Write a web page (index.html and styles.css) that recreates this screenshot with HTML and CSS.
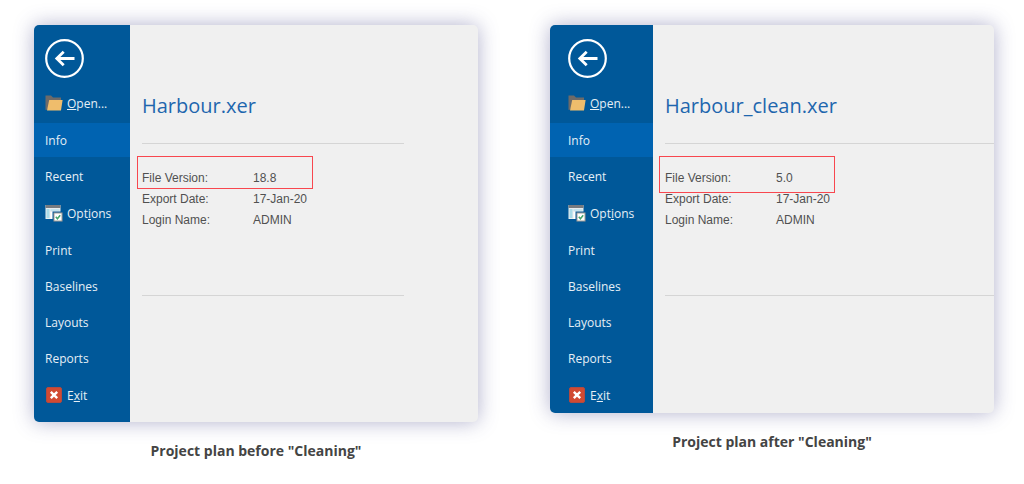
FILE: index.html
```
<!DOCTYPE html>
<html lang="en">
<head>
	<meta charset="UTF-8" />
	<meta name="viewport" content="width=device-width, initial-scale=1.0" />
	<title>XER Cleaning</title>
	<link rel="stylesheet" href="styles.css">
</head>
<body>
	<!-- Shared icons -->
	<svg class="sprite" aria-hidden="true">
		<symbol id="icon-back" viewBox="0 0 39 39">
			<circle cx="19.5" cy="19.5" r="18.3" fill="none" stroke="#fff" stroke-width="2.2"/>
			<path d="M29.5 19.5H12M18.7 12.8L11.8 19.5L18.7 26.2" fill="none" stroke="#fff" stroke-width="2.8"/>
		</symbol>
		<symbol id="icon-open" viewBox="0 0 18 16">
			<path d="M0.5 0.5H6L8 2.5H16V6H5L2.5 14.5L0.5 15Z" fill="#6d6a68"/>
			<path d="M4.2 5H17.6L16 15.5H2Z" fill="#efbd6c"/>
		</symbol>
		<symbol id="icon-options" viewBox="0 0 18 18">
			<rect x="0.5" y="1" width="15" height="14" fill="#e8edef"/>
			<rect x="0.5" y="1" width="15" height="3" fill="#777b80"/>
			<rect x="1.5" y="5" width="3" height="9" fill="#a9dbe9"/>
			<rect x="5.5" y="5" width="9" height="2" fill="#c4e3ed"/>
			<rect x="5.5" y="8" width="4" height="7" fill="#fff"/>
			<path d="M7.5 7.5H18V18H7.5Z" fill="#00589a"/>
			<rect x="9" y="9" width="8" height="8" fill="#fff" stroke="#a39c94"/>
			<path d="M10.8 12.8L12.4 14.7L15.2 11.2" fill="none" stroke="#45a56c" stroke-width="1.5"/>
		</symbol>
		<symbol id="icon-exit" viewBox="0 0 16 16">
			<rect x="0.5" y="0.5" width="15" height="15" rx="1.5" fill="#d14a32" stroke="#b24a40"/>
			<path d="M4.8 4.8L11.2 11.2M11.2 4.8L4.8 11.2" stroke="#fff" stroke-width="2.4"/>
		</symbol>
	</svg>

	<main class="compare">
		<figure class="plan">
			<div class="window window-before">
				<nav class="sidebar">
					<button class="back" aria-label="Back"><svg><use href="#icon-back"/></svg></button>
					<ul class="menu">
						<li><a class="with-icon" href="#"><svg class="icon"><use href="#icon-open"/></svg><span><u>O</u>pen...</span></a></li>
						<li><a class="active" href="#">Info</a></li>
						<li><a href="#">Recent</a></li>
						<li><a class="with-icon" href="#"><svg class="icon icon-tall"><use href="#icon-options"/></svg><span>Opt<u>i</u>ons</span></a></li>
						<li><a href="#">Print</a></li>
						<li><a href="#">Baselines</a></li>
						<li><a href="#">Layouts</a></li>
						<li><a href="#">Reports</a></li>
						<li><a class="with-icon" href="#"><svg class="icon"><use href="#icon-exit"/></svg><span>E<u>x</u>it</span></a></li>
					</ul>
				</nav>
				<section class="content">
					<h2>Harbour.xer</h2>
					<div class="details">
						<table>
							<tr><th scope="row">File Version:</th><td>18.8</td></tr>
							<tr><th scope="row">Export Date:</th><td>17-Jan-20</td></tr>
							<tr><th scope="row">Login Name:</th><td>ADMIN</td></tr>
						</table>
						<span class="marker"></span>
					</div>
				</section>
			</div>
			<figcaption>Project plan before "Cleaning"</figcaption>
		</figure>

		<figure class="plan">
			<div class="window window-after">
				<nav class="sidebar">
					<button class="back" aria-label="Back"><svg><use href="#icon-back"/></svg></button>
					<ul class="menu">
						<li><a class="with-icon" href="#"><svg class="icon"><use href="#icon-open"/></svg><span><u>O</u>pen...</span></a></li>
						<li><a class="active" href="#">Info</a></li>
						<li><a href="#">Recent</a></li>
						<li><a class="with-icon" href="#"><svg class="icon icon-tall"><use href="#icon-options"/></svg><span>Opt<u>i</u>ons</span></a></li>
						<li><a href="#">Print</a></li>
						<li><a href="#">Baselines</a></li>
						<li><a href="#">Layouts</a></li>
						<li><a href="#">Reports</a></li>
						<li><a class="with-icon" href="#"><svg class="icon"><use href="#icon-exit"/></svg><span>E<u>x</u>it</span></a></li>
					</ul>
				</nav>
				<section class="content">
					<h2>Harbour_clean.xer</h2>
					<div class="details">
						<table>
							<tr><th scope="row">File Version:</th><td>5.0</td></tr>
							<tr><th scope="row">Export Date:</th><td>17-Jan-20</td></tr>
							<tr><th scope="row">Login Name:</th><td>ADMIN</td></tr>
						</table>
						<span class="marker"></span>
					</div>
				</section>
			</div>
			<figcaption>Project plan after "Cleaning"</figcaption>
		</figure>
	</main>
</body>
</html>
```
FILE: styles.css
```
* {
	box-sizing: border-box;
}
body {
	margin: 0;
	background-color: #fff;
	font-family: "Open Sans", sans-serif;
}
.sprite {
	display: none;
}
.compare {
	display: flex;
	align-items: flex-start;
	gap: 72px;
	padding: 25px 30px 0 34px;
}
.plan {
	flex: 1;
	min-width: 0;
	margin: 0;
}
.window {
	display: flex;
	overflow: hidden;
	border-radius: 5px;
	background-color: #f0f0f0;
	box-shadow: 0 0 20px rgba(60, 60, 130, 0.4);
}

/* Sidebar */
.sidebar {
	flex: none;
	width: 96px;
	padding-top: 14px;
	background-color: #005899;
}
.window-before .sidebar {
	padding-bottom: 9px;
}
.window-after .sidebar {
	width: 103px;
}
.back {
	display: block;
	width: 39px;
	height: 39px;
	margin: 0 0 7px 11px;
	padding: 0;
	border: none;
	background: none;
	cursor: pointer;
}
.window-after .back {
	margin-left: 18px;
}
.back svg {
	display: block;
	width: 39px;
	height: 39px;
}
.menu {
	display: flex;
	flex-direction: column;
	gap: 2px;
	margin: 0;
	padding: 0;
	list-style: none;
}
.menu a {
	display: flex;
	align-items: center;
	height: 34px;
	padding-left: 11px;
	color: #e6eff6;
	font-size: 12px;
	text-decoration: none;
}
.window-after .menu a {
	padding-left: 18px;
}
.menu .with-icon {
	height: 36px;
	gap: 4px;
}
.menu .active {
	background-color: #0063b1;
}
.icon {
	width: 18px;
	height: 16px;
}
.icon-tall {
	height: 18px;
}

/* File info */
.content {
	flex: 1;
	min-width: 0;
	padding: 66px 0 0 12px;
}
.window-before .content {
	padding-right: 74px;
}
.content h2 {
	margin: 0;
	padding-bottom: 22px;
	color: #1e66ae;
	font-size: 20px;
	font-weight: 400;
	line-height: 30px;
}
.details {
	position: relative;
	height: 153px;
	padding-top: 24px;
	border-top: 1px solid #d5d5d5;
	border-bottom: 1px solid #d5d5d5;
}
.details table {
	border-collapse: collapse;
	color: #505050;
	font-family: "Liberation Sans", Arial, sans-serif;
	font-size: 12px;
	line-height: 21px;
}
.details th {
	width: 111px;
	padding: 0;
	font-weight: 400;
	text-align: left;
}
.details td {
	padding: 0;
}
.marker {
	position: absolute;
	top: 12px;
	left: -5px;
	width: 176px;
	height: 33px;
	border: 1px solid #f8474f;
}
.window-after .marker {
	left: -6px;
	height: 37px;
}
figcaption {
	margin-top: 19px;
	color: #444;
	font-size: 14px;
	font-weight: 700;
	line-height: 20px;
	text-align: center;
}
```
